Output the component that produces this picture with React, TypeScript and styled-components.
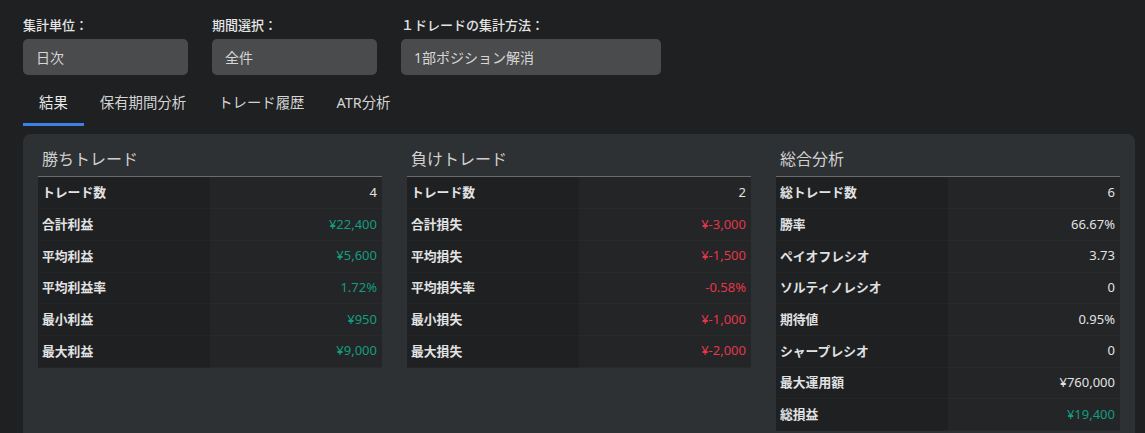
import React, { useState } from "react";
import styled, { createGlobalStyle } from "styled-components";

const GlobalStyle = createGlobalStyle`
  body {
    margin: 0;
    background: #1e2022;
    font-family: "Noto Sans", "Noto Sans CJK JP", sans-serif;
    color: #e2e2e2;
  }
`;

type Tone = "plain" | "gain" | "loss";

const winRows: [string, string, Tone][] = [
  ["トレード数", "4", "plain"],
  ["合計利益", "¥22,400", "gain"],
  ["平均利益", "¥5,600", "gain"],
  ["平均利益率", "1.72%", "gain"],
  ["最小利益", "¥950", "gain"],
  ["最大利益", "¥9,000", "gain"],
];

const loseRows: [string, string, Tone][] = [
  ["トレード数", "2", "plain"],
  ["合計損失", "¥-3,000", "loss"],
  ["平均損失", "¥-1,500", "loss"],
  ["平均損失率", "-0.58%", "loss"],
  ["最小損失", "¥-1,000", "loss"],
  ["最大損失", "¥-2,000", "loss"],
];

const totalRows: [string, string, Tone][] = [
  ["総トレード数", "6", "plain"],
  ["勝率", "66.67%", "plain"],
  ["ペイオフレシオ", "3.73", "plain"],
  ["ソルティノレシオ", "0", "plain"],
  ["期待値", "0.95%", "plain"],
  ["シャープレシオ", "0", "plain"],
  ["最大運用額", "¥760,000", "plain"],
  ["総損益", "¥19,400", "gain"],
];

const tabs = ["結果", "保有期間分析", "トレード履歴", "ATR分析"];

function App() {
  const [active, setActive] = useState(0);

  return (
    <Page>
      <GlobalStyle />
      <Filters>
        <Field $width={165}>
          <FieldLabel>集計単位：</FieldLabel>
          <Select>日次</Select>
        </Field>
        <Field $width={165}>
          <FieldLabel>期間選択：</FieldLabel>
          <Select>全件</Select>
        </Field>
        <Field $width={260}>
          <FieldLabel>１ドレードの集計方法：</FieldLabel>
          <Select>1部ポジション解消</Select>
        </Field>
      </Filters>

      <TabBar>
        {tabs.map((t, i) => (
          <Tab key={t} $active={i === active} onClick={() => setActive(i)}>
            {t}
          </Tab>
        ))}
      </TabBar>

      <Panel>
        <Section title="勝ちトレード" rows={winRows} />
        <Section title="負けトレード" rows={loseRows} />
        <Section title="総合分析" rows={totalRows} />
      </Panel>
    </Page>
  );
}

function Section({ title, rows }: { title: string; rows: [string, string, Tone][] }) {
  return (
    <Column>
      <Title>{title}</Title>
      <Table>
        <tbody>
          {rows.map(([k, v, tone]) => (
            <tr key={k}>
              <KeyCell>{k}</KeyCell>
              <ValueCell $tone={tone}>{v}</ValueCell>
            </tr>
          ))}
        </tbody>
      </Table>
    </Column>
  );
}

export default App;

const Page = styled.div`
  padding: 15px 10px 0 23px;
`;

const Filters = styled.div`
  display: flex;
  gap: 24px;
`;

const Field = styled.div<{ $width: number }>`
  display: flex;
  flex-direction: column;
  gap: 4px;
  width: ${(p) => p.$width}px;
`;

const FieldLabel = styled.div`
  font-size: 13px;
  line-height: 20px;
  font-weight: 500;
  color: #e4e4e4;
`;

const Select = styled.div`
  height: 36px;
  box-sizing: border-box;
  display: flex;
  align-items: center;
  padding: 0 13px;
  background: #4a4b4c;
  border-radius: 5px;
  font-size: 14px;
  color: #d6d6d6;
`;

const TabBar = styled.div`
  display: flex;
  margin-top: 8px;
`;

const Tab = styled.div<{ $active: boolean }>`
  padding: 10px 16px 10px;
  font-size: 14.4px;
  line-height: 20px;
  color: ${(p) => (p.$active ? "#e8e8e8" : "#d4d4d4")};
  border-bottom: 3px solid ${(p) => (p.$active ? "#3b82e6" : "transparent")};
  cursor: pointer;
`;

const Panel = styled.div`
  margin-top: 8px;
  background: #2e3133;
  border-radius: 8px;
  padding: 14px 15px 15px;
  display: grid;
  grid-template-columns: repeat(3, 1fr);
  gap: 25px;
  align-items: start;
`;

const Column = styled.div`
  display: flex;
  flex-direction: column;
`;

const Title = styled.div`
  font-size: 16px;
  line-height: 22px;
  padding: 0 4px 6px;
  color: #d0d0d0;
  border-bottom: 1px solid #6a6b6c;
`;

const Table = styled.table`
  width: 100%;
  border-collapse: collapse;
  table-layout: fixed;
`;

const KeyCell = styled.td`
  height: 31.7px;
  box-sizing: border-box;
  padding: 0 4px 2px;
  background: #1e2022;
  border-bottom: 1px solid #222426;
  font-size: 12.8px;
  font-weight: 700;
  color: #e2e2e2;
`;

const ValueCell = styled.td<{ $tone: Tone }>`
  height: 31.7px;
  box-sizing: border-box;
  padding: 0 5px 2px;
  text-align: right;
  background: #232527;
  border-bottom: 1px solid #27292b;
  font-size: 13px;
  color: ${(p) =>
    p.$tone === "gain" ? "#149c80" : p.$tone === "loss" ? "#e5364a" : "#e2e2e2"};
`;
